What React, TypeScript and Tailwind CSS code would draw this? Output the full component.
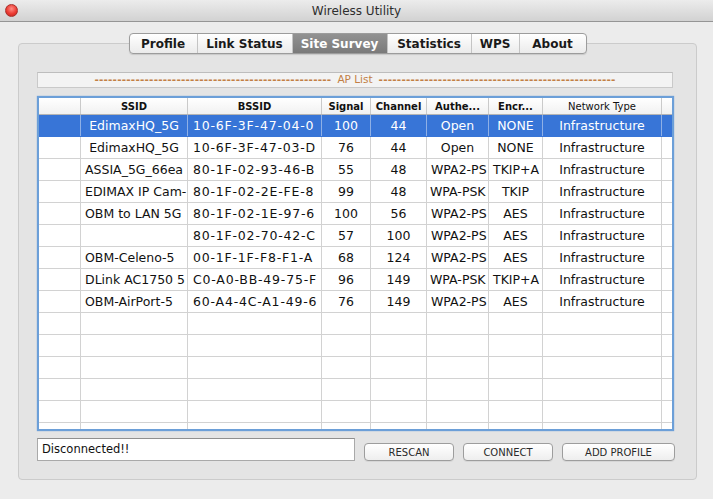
import React from "react";

const tabs = [
  { label: "Profile", w: "w-[67px]" },
  { label: "Link Status", w: "w-[95px]" },
  { label: "Site Survey", w: "w-[95px]", active: true },
  { label: "Statistics", w: "w-[84px]" },
  { label: "WPS", w: "w-[48px]" },
  { label: "About", w: "w-[67px]" },
];

const colW = [
  "w-[42px]",
  "w-[107px]",
  "w-[134px]",
  "w-[49px]",
  "w-[56px]",
  "w-[62px]",
  "w-[54px]",
  "w-[119px]",
  "w-[10px]",
];

const headers = ["", "SSID", "BSSID", "Signal", "Channel", "Authe...", "Encr...", "Network Type", ""];

// a leading "<" marks text the list has cut short, shown from the cell's left edge
const rows = [
  ["EdimaxHQ_5G", "10-6F-3F-47-04-0", "100", "44", "Open", "NONE", "Infrastructure"],
  ["EdimaxHQ_5G", "10-6F-3F-47-03-D", "76", "44", "Open", "NONE", "Infrastructure"],
  ["ASSIA_5G_66ea", "80-1F-02-93-46-B", "55", "48", "<WPA2-PS", "<TKIP+A", "Infrastructure"],
  ["<EDIMAX IP Cam-", "80-1F-02-2E-FE-8", "99", "48", "WPA-PSK", "TKIP", "Infrastructure"],
  ["<OBM to LAN 5G", "80-1F-02-1E-97-6", "100", "56", "<WPA2-PS", "AES", "Infrastructure"],
  ["", "80-1F-02-70-42-C", "57", "100", "<WPA2-PS", "AES", "Infrastructure"],
  ["<OBM-Celeno-5", "00-1F-1F-F8-F1-A", "68", "124", "<WPA2-PS", "AES", "Infrastructure"],
  ["<DLink AC1750 5", "C0-A0-BB-49-75-F", "96", "149", "WPA-PSK", "<TKIP+A", "Infrastructure"],
  ["<OBM-AirPort-5", "60-A4-4C-A1-49-6", "76", "149", "<WPA2-PS", "AES", "Infrastructure"],
];

const dashes = "-".repeat(52);

export default function App() {
  const allRows = [...rows];
  while (allRows.length < 15) allRows.push(["", "", "", "", "", "", ""]);

  return (
    <div className="w-[713px] h-[499px] bg-[#ececec] flex flex-col overflow-hidden font-['DejaVu_Sans',sans-serif] text-[#111]">
      {/* title bar */}
      <div className="h-[22px] flex items-center px-[5px] bg-linear-to-b from-[#ececec] to-[#d2d2d2] border-b border-[#959595]">
        <div className="w-[13px] h-[13px] rounded-full border border-[#a8302b] bg-[radial-gradient(circle_at_50%_35%,#ff8d85_0%,#ec3b33_55%,#b8221c_100%)]" />
        <div className="flex-1 text-center text-[12px] text-[#2e2e2e] pr-[13px]">Wireless Utility</div>
      </div>

      <div className="flex flex-col pt-[11px] pl-[18px]">
        {/* tabs */}
        <div className="relative z-10 flex justify-center w-[679px]">
          <div className="flex h-[21px] border border-[#9c9c9c] rounded-[4px] overflow-hidden bg-linear-to-b from-white to-[#ebebeb] shadow-[0_1px_1px_rgba(0,0,0,0.12)]">
            {tabs.map((t, i) => (
              <div
                key={t.label}
                className={`${t.w} flex items-center justify-center text-[12px] font-bold ${i > 0 ? "border-l border-[#c4c4c4]" : ""} ${
                  t.active ? "bg-linear-to-b from-[#929292] to-[#7a7a7a] text-white border-[#7a7a7a]" : "text-[#1a1a1a]"
                }`}
              >
                {t.label}
              </div>
            ))}
          </div>
        </div>

        {/* group box */}
        <div className="-mt-[11px] w-[679px] h-[437px] border border-[#cbcbcb] rounded-[4px] bg-[#e4e4e4] pt-[28px] pl-[18px] flex flex-col">
          {/* AP list bar */}
          <div className="w-[636px] h-[16px] bg-[#f3f3f3] border border-[#c9c9c9] border-t-[#bdbdbd] flex items-center justify-center gap-[6px] text-[10.5px] text-[#c27f45] overflow-hidden whitespace-nowrap">
            <span className="tracking-[0.2px] font-bold">{dashes}</span>
            <span>AP List</span>
            <span className="tracking-[0.2px] font-bold">{dashes}</span>
          </div>

          {/* table */}
          <div className="mt-[8px] w-[637px] h-[335px] border-2 border-[#6c9fd8] shadow-[0_0_1px_#6c9fd8] bg-white overflow-hidden">
            <div className="flex h-[17px] bg-linear-to-b from-white to-[#f1f1f1] border-b border-[#b4b4b4]">
              {headers.map((h, i) => (
                <div
                  key={i}
                  className={`${colW[i]} shrink-0 flex items-center justify-center text-[10px] ${i === 7 ? "font-normal" : "font-bold"} ${i < 8 ? "border-r border-[#cacaca]" : ""}`}
                >
                  {h}
                </div>
              ))}
            </div>
            {allRows.map((r, ri) => {
              const sel = ri === 0;
              const cells = ["", ...r, ""];
              return (
                <div key={ri} className={`flex h-[22px] border-b ${sel ? "bg-[#3875d7] text-white border-[#3875d7]" : "border-[#d2d2d2]"}`}>
                  {cells.map((c, ci) => {
                    const cut = c.startsWith("<");
                    const text = cut ? c.slice(1) : c;
                    return (
                      <div
                        key={ci}
                        className={`${colW[ci]} shrink-0 overflow-hidden whitespace-nowrap text-[12.5px] leading-[21px] ${
                          ci === 2 ? "pl-[5px] tracking-[0.8px] text-left" : cut ? "pl-[4px] text-left" : "px-[3px] text-center"
                        } ${ci < 8 ? (sel ? "border-r border-[#8fb0e6]" : "border-r border-[#d2d2d2]") : ""}`}
                      >
                        {text}
                      </div>
                    );
                  })}
                </div>
              );
            })}
          </div>

          {/* bottom controls */}
          <div className="mt-[7px] flex items-end">
            <div className="w-[318px] h-[23px] bg-white border border-[#a9a9a9] border-t-[#8f8f8f] flex items-center px-[4px] text-[11.5px]">
              Disconnected!!
            </div>
            <div className="ml-[9px] flex gap-[9px]">
              {[
                { l: "RESCAN", w: "w-[90px]" },
                { l: "CONNECT", w: "w-[90px]" },
                { l: "ADD PROFILE", w: "w-[113px]" },
              ].map((b) => (
                <div
                  key={b.l}
                  className={`${b.w} h-[18px] flex items-center justify-center rounded-[4px] border border-[#9d9d9d] bg-linear-to-b from-white to-[#eeeeee] text-[10px] text-[#2a2a2a] shadow-[0_1px_0_rgba(0,0,0,0.06)]`}
                >
                  {b.l}
                </div>
              ))}
            </div>
          </div>
        </div>
      </div>
    </div>
  );
}
